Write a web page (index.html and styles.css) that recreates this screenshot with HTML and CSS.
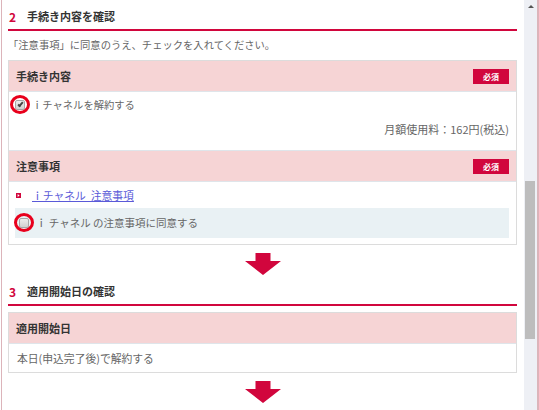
FILE: index.html
```html
<!DOCTYPE html>
<html lang="ja">
<head>
    <meta charset="UTF-8">
    <title>手続き内容を確認</title>
    <link rel="stylesheet" href="styles.css">
</head>
<body>
    <div class="frame">
        <h2 class="step"><span class="step-no">2</span>手続き内容を確認</h2>
        <p class="lead">「注意事項」に同意のうえ、チェックを入れてください。</p>

        <div class="box">
            <div class="box-head">
                <span>手続き内容</span>
                <span class="badge">必須</span>
            </div>
            <div class="box-body plan">
                <label class="check-row">
                    <span class="check checked"><span class="ring"></span></span>
                    ｉチャネルを解約する
                </label>
                <p class="price">月額使用料：162円(税込)</p>
            </div>
            <div class="box-head">
                <span>注意事項</span>
                <span class="badge">必須</span>
            </div>
            <div class="box-body notes">
                <div class="link-row">
                    <svg class="bullet" width="5" height="5" viewBox="0 0 5 5"><rect width="5" height="5" fill="#d1063d"/><path d="M1.6 1 L3.6 2.5 L1.6 4 Z" fill="#fff"/></svg>
                    <a href="#" class="note-link">ｉチャネル&nbsp;&nbsp;注意事項</a>
                </div>
                <label class="agree">
                    <span class="check"><span class="ring"></span></span>
                    ｉ チャネル の注意事項に同意する
                </label>
            </div>
        </div>

        <div class="arrow">
            <svg width="36" height="22" viewBox="0 0 36 22"><path d="M10.5 0 H25.5 V8 H36 L18 22 L0 8 H10.5 Z" fill="#d1063d"/></svg>
        </div>

        <h2 class="step"><span class="step-no">3</span>適用開始日の確認</h2>
        <div class="box">
            <div class="box-head">
                <span>適用開始日</span>
            </div>
            <div class="box-body start">本日(申込完了後)で解約する</div>
        </div>

        <div class="arrow">
            <svg width="36" height="22" viewBox="0 0 36 22"><path d="M10.5 0 H25.5 V8 H36 L18 22 L0 8 H10.5 Z" fill="#d1063d"/></svg>
        </div>
    </div>

    <div class="scrollbar">
        <div class="sb-up"></div>
        <div class="sb-thumb"></div>
    </div>
</body>
</html>
```

FILE: styles.css
```css
html, body {
    margin: 0;
    height: 410px;
    overflow: hidden;
}
body {
    display: flex;
    background: #fff;
    font-family: "Noto Sans CJK JP", "Noto Sans", sans-serif;
    color: #666;
    font-size: 10.3px;
}
.frame {
    flex: 1;
    margin-left: 1px;
    border-left: 1px solid #dcb4ba;
    padding: 0 7px 0 6px;
}
.step {
    margin: 0;
    padding: 9px 0 5px 1px;
    line-height: 15px;
    font-size: 11px;
    font-weight: bold;
    color: #333;
    border-bottom: 2px solid #d1063d;
    display: flex;
}
.step-no {
    width: 18px;
    color: #d1063d;
    font-size: 12px;
}
.lead {
    margin: 6px 0 7px;
    line-height: 16px;
    color: #666;
}
.box {
    border: 1px solid #dcdcdc;
    margin-top: 6px;
}
.lead + .box {
    margin-top: 0;
}
.box-head {
    height: 30px;
    background: #f6d4d5;
    display: flex;
    align-items: center;
    justify-content: space-between;
    padding: 0 7px;
    font-size: 11px;
    font-weight: bold;
    color: #333;
}
.box-body {
    border-top: 1px solid #dfe5ea;
    border-bottom: 1px solid #dfe5ea;
    background: #fff;
}
.box-body:last-child {
    border-bottom: none;
}
.badge {
    width: 36px;
    height: 15px;
    background: #d1063d;
    color: #fff;
    font-size: 8px;
    font-weight: bold;
    line-height: 15px;
    text-align: center;
}
.plan {
    box-sizing: border-box;
    height: 60px;
    padding: 5px 7px 0 6px;
}
.check-row, .agree {
    display: flex;
    align-items: center;
    gap: 7px;
    line-height: 16px;
}
.check {
    position: relative;
    width: 8px;
    height: 8px;
    border: 1px solid #a8a8a8;
    border-radius: 2px;
    background: linear-gradient(#ededed, #d2d2d2);
    flex: none;
}
.check.checked::before {
    content: "";
    position: absolute;
    left: 3px;
    top: 0;
    width: 1px;
    height: 4px;
    border: solid #444;
    border-width: 0 2px 2px 0;
    transform: rotate(40deg);
}
.ring {
    position: absolute;
    left: -6px;
    top: -6px;
    width: 14px;
    height: 13px;
    border: 3px solid #e8001c;
    border-radius: 50%;
}
.price {
    margin: 8px 0 0;
    line-height: 16px;
    text-align: right;
    font-size: 11px;
}
.notes {
    padding: 5px 7px 6px 6px;
}
.link-row {
    display: flex;
    align-items: center;
    line-height: 16px;
    padding-left: 1px;
}
.bullet {
    margin-right: 11px;
}
.note-link {
    color: #5a5ad8;
    text-decoration: underline;
    font-size: 10.8px;
}
.agree {
    margin-top: 5px;
    height: 30px;
    background: #e9f1f4;
    padding-left: 4px;
    gap: 7px;
    font-size: 10.5px;
}
.start {
    padding: 6px 8px;
    line-height: 16px;
    font-size: 10.8px;
}
.arrow {
    display: flex;
    justify-content: center;
    padding-top: 8px;
    height: 22px;
}
.arrow svg {
    display: block;
}
.scrollbar {
    width: 13px;
    background: #eef0f5;
    border-right: 2px solid #dcb4ba;
    display: flex;
    flex-direction: column;
}
.sb-up {
    height: 14px;
    display: flex;
    justify-content: center;
}
.sb-up::before {
    content: "";
    margin-top: 5px;
    border: solid transparent;
    border-width: 0 3px 3px;
    border-bottom-color: #555;
    height: 0;
}
.sb-thumb {
    margin: 167px 0 0 1px;
    width: 10px;
    height: 158px;
    background: #bdbdbd;
}
```
